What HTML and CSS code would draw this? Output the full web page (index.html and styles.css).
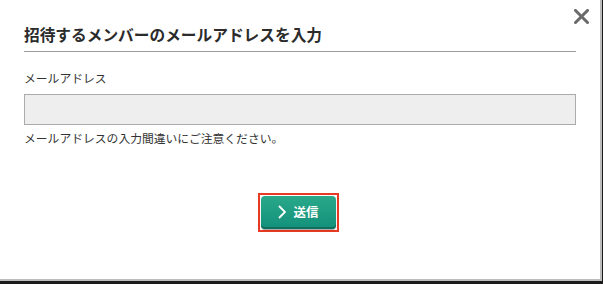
FILE: index.html
```html
<!DOCTYPE html>
<html lang="ja">
<head>
<meta charset="utf-8">
<link rel="stylesheet" href="styles.css">
</head>
<body>
<div class="modal">
  <button class="close" aria-label="閉じる">
    <svg width="15" height="15" viewBox="0 0 15 15"><path d="M1.5 1.5 L13.5 13.5 M13.5 1.5 L1.5 13.5" stroke="#6a6a6a" stroke-width="3" stroke-linecap="square"/></svg>
  </button>
  <h1 class="title">招待するメンバーのメールアドレスを入力</h1>
  <label class="label" for="mail">メールアドレス</label>
  <input class="field" id="mail" type="text">
  <p class="note">メールアドレスの入力間違いにご注意ください。</p>
  <div class="actions">
    <div class="highlight">
      <button class="send">
        <svg class="chev" width="8" height="14" viewBox="0 0 8 14"><path d="M1 1 L7 7 L1 13" fill="none" stroke="#fff" stroke-width="1.8"/></svg>
        <span>送信</span>
      </button>
    </div>
  </div>
</div>
</body>
</html>
```
FILE: styles.css
```css
html, body {
  margin: 0;
  padding: 0;
  background: #1b1b1b;
  font-family: "Noto Sans CJK JP", "Noto Sans", sans-serif;
  color: #333;
}
.modal {
  position: relative;
  box-sizing: border-box;
  width: 602px;
  height: 281px;
  background: #fff;
  border-right: 2px solid #bdbdbd;
  border-bottom: 2px solid #bdbdbd;
  padding: 25px 24px 0 24px;
}
.close {
  position: absolute;
  top: 9px;
  left: 574px;
  width: 15px;
  height: 15px;
  padding: 0;
  border: 0;
  background: none;
  display: block;
}
.close svg { display: block; }
.title {
  margin: 0;
  font-size: 15.7px;
  line-height: 20px;
  font-weight: bold;
  color: #2b2b2b;
  padding-bottom: 6px;
  border-bottom: 1px solid #9a9a9a;
}
.label {
  display: block;
  margin-top: 17px;
  font-size: 11.8px;
  line-height: 18px;
  color: #333;
}
.field {
  display: block;
  box-sizing: border-box;
  margin: 7px 0 0 0;
  width: 552px;
  height: 31px;
  background: #eeeeee;
  border: 1px solid #ababab;
  border-radius: 0;
  padding: 0 6px;
}
.note {
  margin: 4px 0 0 0;
  font-size: 11.8px;
  line-height: 18px;
  color: #333;
}
.actions {
  display: flex;
  justify-content: center;
  margin-top: 46px;
  padding-right: 3px;
}
.highlight {
  border: 2px solid #e63a22;
  padding: 1px;
  display: flex;
}
.send {
  box-sizing: border-box;
  width: 75px;
  height: 33px;
  border: 0;
  border-radius: 4px;
  background: linear-gradient(#29a98a, #13907a);
  box-shadow: inset 0 -2px 0 #0f6e5c, 0 1px 1px rgba(0,0,0,0.35);
  color: #fff;
  font-family: "Noto Sans CJK JP", "Noto Sans", sans-serif;
  font-weight: bold;
  font-size: 12.5px;
  display: flex;
  align-items: center;
  justify-content: center;
  gap: 7px;
  padding: 0 0 2px 0;
}
.chev { display: block; }
```
